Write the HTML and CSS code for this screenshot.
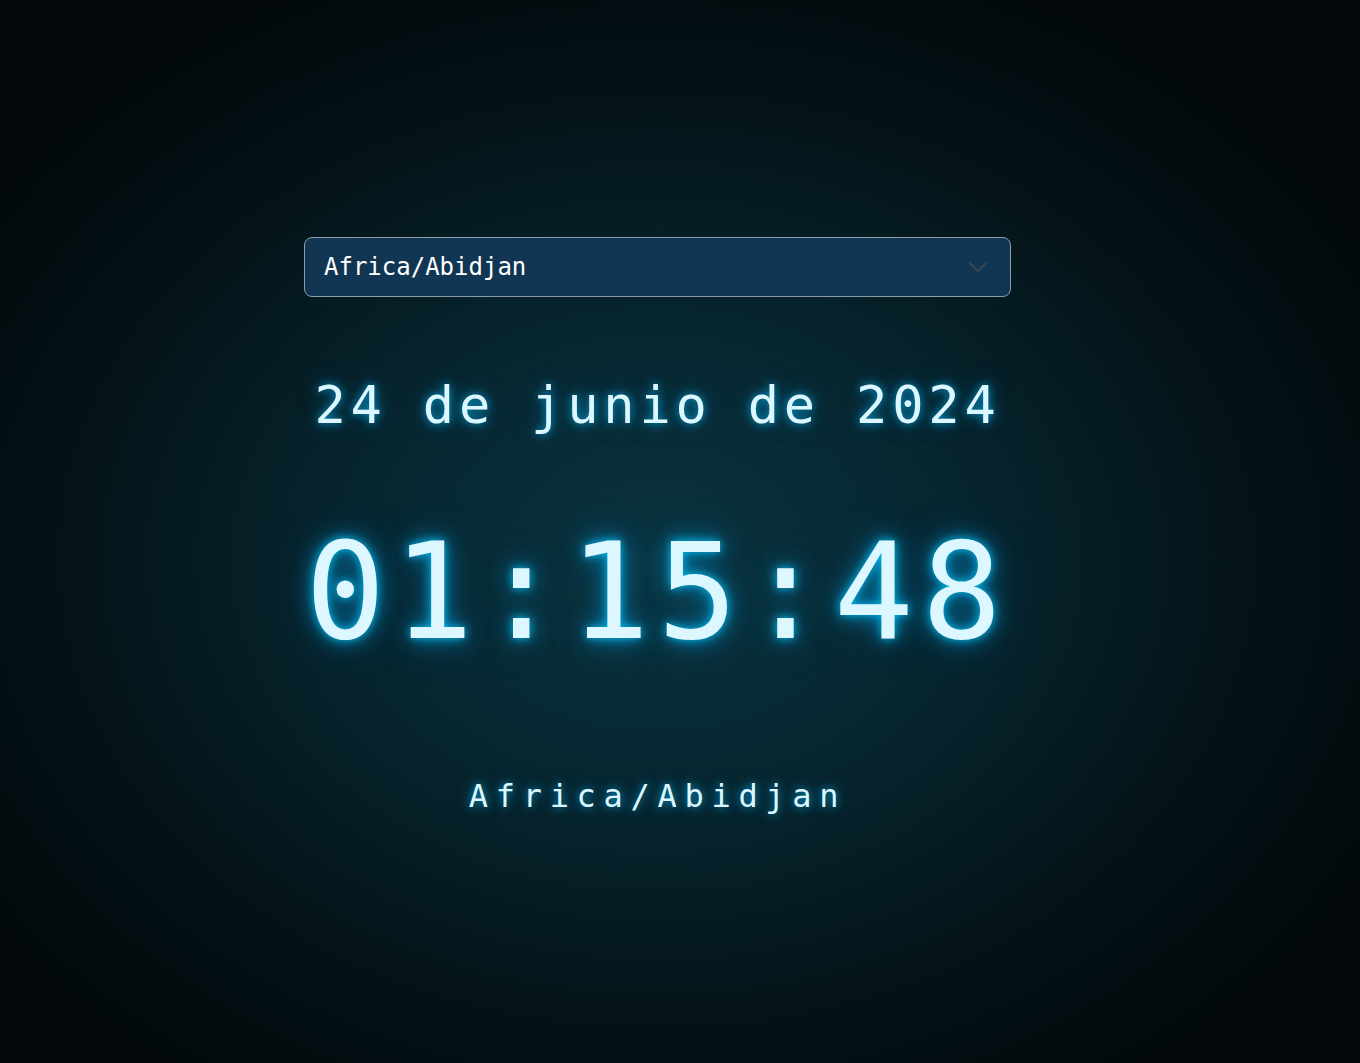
FILE: index.html
```html
<!DOCTYPE html>
<html lang="es">
<head>
<meta charset="utf-8">
<title>Reloj mundial</title>
<link rel="stylesheet" href="styles.css">
</head>
<body>
<main class="app">
  <div class="tz-select">
    <span class="tz-value">Africa/Abidjan</span>
    <svg class="chevron" width="20" height="12" viewBox="0 0 20 12" aria-hidden="true">
      <path d="M2 2 L10 10 L18 2" fill="none" stroke="#3a4653" stroke-width="2" stroke-linecap="round" stroke-linejoin="round"/>
    </svg>
  </div>
  <div class="date">24 de junio de 2024</div>
  <div class="time">01:15:48</div>
  <div class="zone">Africa/Abidjan</div>
</main>
</body>
</html>
```

FILE: styles.css
```css
html, body {
  margin: 0;
  padding: 0;
}
body {
  min-height: 100vh;
  background: radial-gradient(ellipse 62% 62% at 657px 560px, #0a3440 0%, #072630 35%, #041318 70%, #020709 100%);
  background-color: #020709;
  font-family: "DejaVu Sans Mono", "Liberation Mono", monospace;
  color: #dcf7ff;
}
.app {
  width: 707px;
  margin-left: 304px;
  padding-top: 237px;
  display: flex;
  flex-direction: column;
}
.tz-select {
  box-sizing: border-box;
  height: 60px;
  border: 1px solid #8f9ba6;
  border-radius: 8px;
  background: #113654;
  display: flex;
  align-items: center;
  justify-content: space-between;
  padding: 0 22px 0 19px;
}
.tz-value {
  font-size: 24px;
  color: #ffffff;
  line-height: 1;
}
.chevron {
  display: block;
}
.date {
  margin-top: 82px;
  font-size: 52px;
  line-height: 52px;
  letter-spacing: 4.8px;
  text-align: center;
  text-shadow: 0 0 8px rgba(0, 190, 255, 0.75), 0 0 20px rgba(0, 150, 220, 0.5);
}
.time {
  margin-top: 95px;
  font-size: 133px;
  line-height: 133px;
  letter-spacing: 8px;
  text-align: center;
  text-shadow: 0 0 10px rgba(0, 200, 255, 0.9), 0 0 22px rgba(0, 170, 235, 0.7), 0 0 44px rgba(0, 130, 200, 0.4);
}
.zone {
  margin-top: 121px;
  font-size: 32px;
  line-height: 32px;
  letter-spacing: 7.7px;
  text-align: center;
  text-shadow: 0 0 8px rgba(0, 190, 255, 0.7), 0 0 18px rgba(0, 150, 220, 0.45);
}
```
